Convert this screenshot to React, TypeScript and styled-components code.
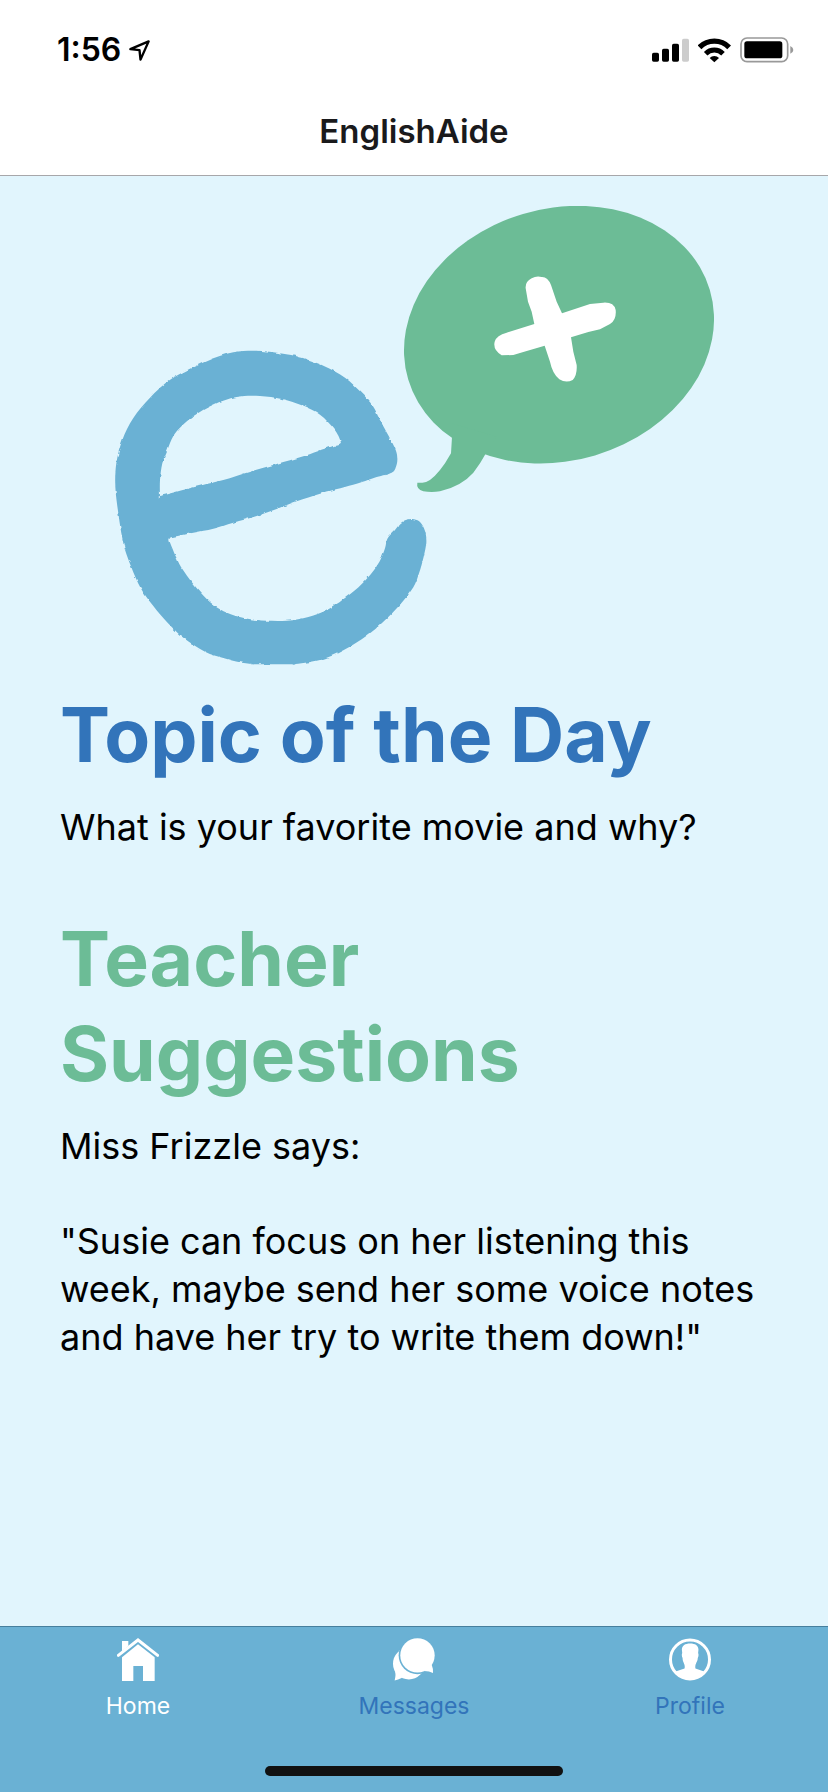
import React from "react";
import styled, { createGlobalStyle } from "styled-components";

const color = {
  sky: "#e1f5fd",
  bar: "#6ab1d4",
  blue: "#3274ba",
  green: "#6cbc96",
};

const GlobalStyle = createGlobalStyle`
  *, *::before, *::after { box-sizing: border-box; }
  body {
    margin: 0;
    background: ${color.sky};
    font-family: Inter, "Liberation Sans", sans-serif;
  }
`;

const Screen = styled.div`
  min-height: 100vh;
  display: flex;
  flex-direction: column;
  background: ${color.sky};
`;

const Header = styled.header`
  background: #fff;
  border-bottom: 1px solid #a7a7aa;
`;

const StatusBar = styled.div`
  height: 88px;
  padding: 12px 34px 0 57px;
  display: flex;
  align-items: center;
  justify-content: space-between;
`;

const StatusGroup = styled.div<{ $gap: number }>`
  display: flex;
  align-items: center;
  gap: ${(p) => p.$gap}px;
`;

const Time = styled.time`
  font-size: 32px;
  line-height: 40px;
  font-weight: 600;
  color: #000;
`;

const TitleBar = styled.div`
  height: 87px;
  padding-bottom: 2px;
  display: flex;
  align-items: center;
  justify-content: center;
`;

const Title = styled.h1`
  margin: 0;
  font-size: 33px;
  line-height: 40px;
  font-weight: 600;
  color: #1a1a1c;
`;

const Content = styled.main`
  flex: 1;
  padding: 30px 60px;
`;

const Logo = styled.svg`
  display: block;
  width: 600px;
  max-width: 100%;
  height: auto;
  margin: 0 auto 22px;
`;

const Section = styled.section`
  & + & {
    margin-top: 60px;
  }
`;

const Heading = styled.h2<{ $color: string }>`
  margin: 0 0 21px;
  font-size: 75px;
  line-height: 95px;
  font-weight: 700;
  color: ${(p) => p.$color};
`;

const Text = styled.p`
  margin: 0;
  font-size: 36px;
  line-height: 48px;
  color: #000;

  & + & {
    margin-top: 47px;
  }
`;

const TabBar = styled.nav`
  height: 166px;
  display: flex;
  flex-direction: column;
  justify-content: space-between;
  align-items: center;
  padding: 11px 0 16px;
  background: ${color.bar};
  border-top: 1px solid #467f9d;
`;

const Tabs = styled.div`
  width: 100%;
  display: flex;
`;

const Tab = styled.a<{ $active?: boolean }>`
  flex: 1;
  display: flex;
  flex-direction: column;
  align-items: center;
  gap: 10px;
  font-size: 23px;
  line-height: 30px;
  text-decoration: none;
  color: ${(p) => (p.$active ? "#fff" : color.blue)};
`;

const HomeIndicator = styled.div`
  width: 36%;
  height: 10px;
  border-radius: 5px;
  background: #111;
`;

const LocationIcon = () => (
  <svg width="23" height="23" viewBox="384 116 68 68" aria-hidden="true">
    <path d="M391 146 L445 123 L421 177 L418 149 Z" fill="none" stroke="#000" strokeWidth="7" strokeLinejoin="round" />
  </svg>
);

const SignalIcon = () => (
  <svg width="37" height="24" viewBox="717 112 111 72" aria-label="Signal">
    <rect x="717" y="156" width="21" height="27" rx="5" />
    <rect x="747" y="144" width="21" height="39" rx="5" />
    <rect x="777" y="129" width="21" height="54" rx="5" />
    <rect x="807" y="114" width="21" height="69" rx="5" fill="#ccc" />
  </svg>
);

const WifiIcon = () => (
  <svg width="33" height="25" viewBox="855 110 99 75" aria-label="Wi-Fi">
    <path d="M859.5 138 A63 63 0 0 1 948.5 138" fill="none" stroke="#000" strokeWidth="16" />
    <path d="M878 157 A37 37 0 0 1 930 157" fill="none" stroke="#000" strokeWidth="15" />
    <path d="M904 183 L890 170 A19 19 0 0 1 918 170 Z" />
  </svg>
);

const BatteryIcon = () => (
  <svg width="54" height="26" viewBox="980 110 162 78" aria-label="Battery">
    <rect x="983" y="113" width="140" height="71" rx="18" fill="none" stroke="#999" strokeWidth="5" />
    <rect x="993" y="123" width="114" height="51" rx="8" />
    <path d="M1131 137 Q1140 141 1140 149 Q1140 156 1131 160 Z" fill="#999" />
  </svg>
);

const HomeIcon = () => (
  <svg width="42" height="43" viewBox="348 84 126 129" fill="#fff" aria-hidden="true">
    <path d="M363 93 H382 V108 L363 124 Z" />
    <path d="M352 136 L411 90 L470 136" fill="none" stroke="#fff" strokeWidth="9" strokeLinecap="round" />
    <path d="M411 103 L461 142 V213 H426 V168 H397 V213 H363 V142 Z" />
  </svg>
);

const MessagesIcon = () => (
  <svg width="42" height="43" viewBox="1176 84 127 129" fill="#fff" aria-hidden="true">
    <circle cx="1224" cy="161" r="48" />
    <path d="M1181 182 Q1186 192 1181 212 Q1190 211 1204 204 Z" />
    <circle cx="1250" cy="136" r="57" fill={color.bar} />
    <circle cx="1250" cy="136" r="52" />
    <path d="M1270 183 Q1286 183 1297 189 Q1298 176 1293 164 Z" />
  </svg>
);

const ProfileIcon = () => (
  <svg width="42" height="43" viewBox="144 84 127 129" aria-hidden="true">
    <clipPath id="profile-disc">
      <circle cx="207.5" cy="148.5" r="60" />
    </clipPath>
    <circle cx="207.5" cy="148.5" r="59" fill="none" stroke="#fff" strokeWidth="9" />
    <path
      clipPath="url(#profile-disc)"
      fill="#fff"
      d="M208 100 C224 100 234 107 233 120 L232 129 Q235 136 231 144 C231 151 228 155 226 160 C223 166 223 171 224 176 L248 184 L262 192 V216 H152 V192 L166 184 L191 176 C192 171 192 166 189 160 C187 155 185 151 185 144 Q181 136 184 129 L183 120 C182 107 192 100 208 100 Z"
    />
  </svg>
);

type Point = [number, number];

// Closed curve through every point; a point listed twice stays a sharp corner.
const smooth = (pts: Point[]) => {
  const at = (i: number) => pts[(i + pts.length) % pts.length];
  const curves = pts.map((p, i) => {
    const before = at(i - 1);
    const next = at(i + 1);
    const after = at(i + 2);
    const c1 = [p[0] + (next[0] - before[0]) / 6, p[1] + (next[1] - before[1]) / 6];
    const c2 = [next[0] - (after[0] - p[0]) / 6, next[1] - (after[1] - p[1]) / 6];
    return `C${c1.join(" ")} ${c2.join(" ")} ${next.join(" ")}`;
  });
  return `M${pts[0].join(" ")} ${curves.join(" ")} Z`;
};

const markOutline: Point[] = [
  [500, 62], [430, 67], [345, 95], [245, 146], [180, 203], [130, 264], [97, 330], [79, 400], [76, 470],
  [85, 550], [97, 625], [112, 680], [150, 770], [190, 828], [230, 875], [280, 923], [345, 965], [400, 984],
  [450, 997], [490, 1003], [490, 1003], [610, 1003], [610, 1003], [690, 990], [760, 961], [830, 917],
  [880, 875], [930, 824], [970, 772], [987, 730], [1001, 680], [1009, 635], [1005, 603], [992, 578],
  [972, 568], [950, 569], [932, 579], [915, 600], [893, 625], [885, 655], [872, 688], [855, 716],
  [825, 752], [780, 793], [715, 838], [655, 861], [590, 872], [500, 870], [435, 857], [390, 838],
  [350, 807], [310, 762], [275, 714], [260, 685], [245, 650], [238, 630], [243, 622], [243, 622],
  [310, 608], [370, 596], [430, 578], [500, 558], [560, 537], [620, 514], [700, 488], [800, 461],
  [860, 441], [905, 428], [918, 410], [922, 385], [915, 355], [885, 298], [865, 260], [848, 227],
  [810, 184], [765, 143], [700, 107], [620, 79], [560, 68],
];

const markEye: Point[] = [
  [210, 498], [210, 498], [210, 450], [217, 400], [232, 360], [250, 318], [275, 288], [312, 257],
  [370, 224], [440, 201], [510, 198], [575, 207], [635, 226], [690, 254], [733, 298], [752, 335],
  [745, 346], [720, 350], [640, 379], [560, 402], [480, 425], [400, 450], [330, 467], [270, 482],
];

const BrandLogo = () => (
  <Logo viewBox="0 0 1800 1377" role="img" aria-label="EnglishAide logo">
    <defs>
      <filter id="rough" x="-5%" y="-5%" width="110%" height="110%" colorInterpolationFilters="sRGB">
        <feTurbulence type="fractalNoise" baseFrequency="0.05" numOctaves="2" seed="4" />
        <feDisplacementMap in="SourceGraphic" scale="9" xChannelSelector="R" yChannelSelector="G" />
      </filter>
    </defs>
    <g transform="translate(-72 372)" filter="url(#rough)">
      <path fill={color.bar} fillRule="evenodd" d={`${smooth(markOutline)} ${smooth(markEye)}`} />
    </g>
    <g transform="translate(828 -48)">
      <g fill={color.green}>
        <ellipse rx="472" ry="378" transform="translate(507 434) rotate(-16.6)" />
        <path d="M186 700 V741 L183 790 L165 820 L150 840 Q118 880 95 878 L82 878 Q78 897 100 904 Q125 908 150 904 Q215 888 250 848 Q272 820 286 793 L320 740 Z" />
      </g>
      <path
        fill="#fff"
        d="M407 295 Q405 275 425 265 Q440 256 455 261 Q473 260 483 285 L500 335 L516 370 L600 342 L640 338 Q672 336 677 360 Q680 390 660 402 L630 418 L595 426 L543 442 L550 485 L560 525 Q562 555 548 570 Q528 580 508 568 Q487 550 480 515 L464 467 L400 486 L370 495 L335 496 Q308 480 314 455 Q320 435 350 428 L433 402 L425 365 L414 335 Z"
      />
    </g>
  </Logo>
);

export default function App() {
  return (
    <Screen>
      <GlobalStyle />
      <Header>
        <StatusBar>
          <StatusGroup $gap={7}>
            <Time>1:56</Time>
            <LocationIcon />
          </StatusGroup>
          <StatusGroup $gap={9}>
            <SignalIcon />
            <WifiIcon />
            <BatteryIcon />
          </StatusGroup>
        </StatusBar>
        <TitleBar>
          <Title>EnglishAide</Title>
        </TitleBar>
      </Header>

      <Content>
        <BrandLogo />
        <Section>
          <Heading $color={color.blue}>Topic of the Day</Heading>
          <Text>What is your favorite movie and why?</Text>
        </Section>
        <Section>
          <Heading $color={color.green}>Teacher Suggestions</Heading>
          <Text>Miss Frizzle says:</Text>
          <Text>"Susie can focus on her listening this week, maybe send her some voice notes and have her try to write them down!"</Text>
        </Section>
      </Content>

      <TabBar>
        <Tabs>
          <Tab href="#home" $active aria-current="page">
            <HomeIcon />
            Home
          </Tab>
          <Tab href="#messages">
            <MessagesIcon />
            Messages
          </Tab>
          <Tab href="#profile">
            <ProfileIcon />
            Profile
          </Tab>
        </Tabs>
        <HomeIndicator />
      </TabBar>
    </Screen>
  );
}
